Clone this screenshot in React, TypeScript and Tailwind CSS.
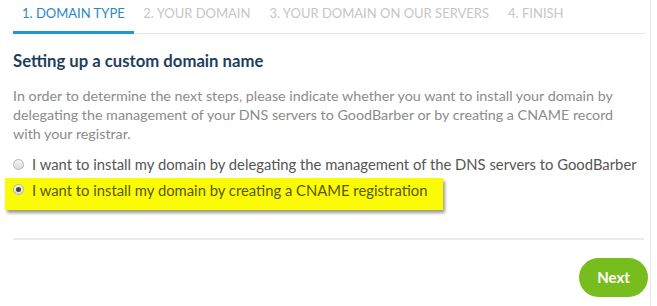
import React, { useState } from 'react';

const steps = ['1. DOMAIN TYPE', '2. YOUR DOMAIN', '3. YOUR DOMAIN ON OUR SERVERS', '4. FINISH'];

const Radio: React.FC<{ checked: boolean }> = ({ checked }) => (
  <span className="flex h-[11px] w-[11px] shrink-0 items-center justify-center rounded-full border border-[#b5b5b5] bg-gradient-to-b from-[#f4f4f4] to-[#dcdcdc]">
    {checked && <span className="h-[5px] w-[5px] rounded-full bg-[#444]" />}
  </span>
);

const App: React.FC = () => {
  const [choice, setChoice] = useState(1);

  return (
    <div className="h-[306px] w-[657px] overflow-hidden bg-white font-['Lato','Liberation_Sans',sans-serif]">
      <div className="flex h-full w-[651px] flex-col border-r border-[#e3e8ea] pl-[13px] pr-[5px]">
        <div className="flex border-b border-[#e6e6e6] pt-[4px]">
          {steps.map((s, i) => (
            <div
              key={s}
              className={
                i === 0
                  ? 'border-b-[3px] border-[#1b9ad0] px-[9px] pb-[6px] text-[13px] text-[#2a88c0] -mb-px'
                  : 'px-[9.5px] pb-[9px] text-[13px] text-[#c6c6c6]'
              }
            >
              {s}
            </div>
          ))}
        </div>
        <h1 className="mt-[16px] text-[16.7px] font-bold leading-[22px] text-[#1e3f5c]">
          Setting up a custom domain name
        </h1>
        <p className="mt-[14px] w-[630px] text-[14.3px] leading-[19px] text-[#8b8b8b]">
          In order to determine the next steps, please indicate whether you want to install your domain by
          delegating the management of your DNS servers to GoodBarber or by creating a CNAME record
          with your registrar.
        </p>
        <div className="mt-[11px] flex flex-col">
          <label className="flex h-[22px] cursor-pointer items-center gap-[8px] text-[14.8px] text-[#555]" onClick={() => setChoice(0)}>
            <Radio checked={choice === 0} />
            I want to install my domain by delegating the management of the DNS servers to GoodBarber
          </label>
          <label
            className="-ml-[8px] mt-[2px] flex h-[32px] w-[438px] cursor-pointer items-start gap-[8px] bg-[#fbfb05] pl-[8px] pt-[1px] text-[14.8px] leading-[22px] text-[#585800] shadow-[2px_3px_3px_rgba(80,80,40,0.55)]"
            onClick={() => setChoice(1)}
          >
            <span className="flex h-[22px] items-center">
              <Radio checked={choice === 1} />
            </span>
            I want to install my domain by creating a CNAME registration
          </label>
        </div>
        <div className="mr-[1px] mt-[28px] border-t-2 border-[#ececec]" />
        <div className="mt-[18px] flex justify-end">
          <button className="-mr-[3px] h-[39px] w-[69px] rounded-full bg-[#78bd1e] text-[15px] font-bold text-white">
            Next
          </button>
        </div>
      </div>
    </div>
  );
};

export default App;
